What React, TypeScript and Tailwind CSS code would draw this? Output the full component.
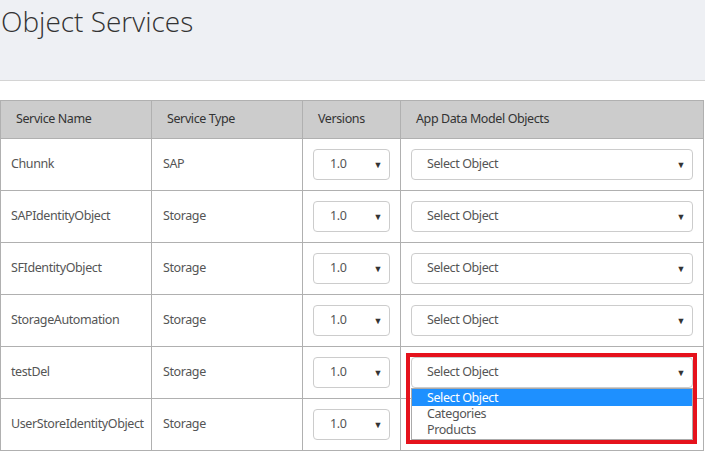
import { useState } from "react";

type Row = { name: string; type: string };

const rows: Row[] = [
  { name: "Chunnk", type: "SAP" },
  { name: "SAPIdentityObject", type: "Storage" },
  { name: "SFIdentityObject", type: "Storage" },
  { name: "StorageAutomation", type: "Storage" },
  { name: "testDel", type: "Storage" },
  { name: "UserStoreIdentityObject", type: "Storage" },
];

const options = ["Select Object", "Categories", "Products"];

function Caret() {
  return <span className="text-[9px] text-[#333] leading-none">▼</span>;
}

function VersionSelect() {
  return (
    <div className="w-[77px] h-[31px] border border-[#ccc] rounded-[4px] bg-white flex items-center justify-between pl-[16px] pr-[7px] text-[#555]">
      <span>1.0</span>
      <Caret />
    </div>
  );
}

function ObjectSelect({ open }: { open?: boolean }) {
  return (
    <div className="relative">
      <div className="h-[31px] border border-[#ccc] rounded-[4px] bg-white flex items-center justify-between pl-[15px] pr-[7px] text-[#555]">
        <span>Select Object</span>
        <Caret />
      </div>
      {open && (
        <>
          <div className="absolute left-0 right-0 top-[31px] bg-white border border-[#aaa] pb-[1px] z-10">
            {options.map((o, i) => (
              <div
                key={o}
                className={
                  i === 0
                    ? "h-[17px] leading-[17px] pl-[15px] bg-[#1e90ff] text-white"
                    : "h-[16px] leading-[16px] pl-[15px] text-[#555]"
                }
              >
                {o}
              </div>
            ))}
          </div>
          <div className="absolute left-[-5px] right-[-4px] top-[-4px] h-[91px] border-[4px] border-[#e5121c] z-20 pointer-events-none" />
        </>
      )}
    </div>
  );
}

export default function App() {
  const [openRow] = useState(4);

  return (
    <div className="w-[705px] h-[454px] bg-white overflow-hidden text-[12.5px] tracking-[-0.4px] font-['Noto_Sans',sans-serif]">
      <div className="h-[81px] bg-[#eef0f4] border-b border-[#d4d4d4]">
        <h1 className="text-[28px] font-light text-[#333] tracking-normal leading-none pt-[7px] pl-[1px] font-['Open_Sans',sans-serif]">
          Object Services
        </h1>
      </div>
      <table className="mt-[19px] w-[703px] border-collapse table-fixed">
        <colgroup>
          <col className="w-[151px]" />
          <col className="w-[151px]" />
          <col className="w-[98px]" />
          <col className="w-[303px]" />
        </colgroup>
        <thead>
          <tr className="h-[38px] bg-[#cccccc] text-[#333] text-left">
            <th className="border border-[#b0b0b0] font-normal pl-[15px]">Service Name</th>
            <th className="border border-[#b0b0b0] font-normal pl-[15px]">Service Type</th>
            <th className="border border-[#b0b0b0] font-normal pl-[15px]">Versions</th>
            <th className="border border-[#b0b0b0] font-normal pl-[15px]">App Data Model Objects</th>
          </tr>
        </thead>
        <tbody>
          {rows.map((r, i) => (
            <tr key={r.name} className="h-[52px] text-[#555]">
              <td className="border border-[#b0b0b0] pl-[10px] whitespace-nowrap">{r.name}</td>
              <td className="border border-[#b0b0b0] pl-[11px]">{r.type}</td>
              <td className="border border-[#b0b0b0] pl-[10px]">
                <VersionSelect />
              </td>
              <td className="border border-[#b0b0b0] px-[10px]">
                <ObjectSelect open={i === openRow} />
              </td>
            </tr>
          ))}
        </tbody>
      </table>
    </div>
  );
}
